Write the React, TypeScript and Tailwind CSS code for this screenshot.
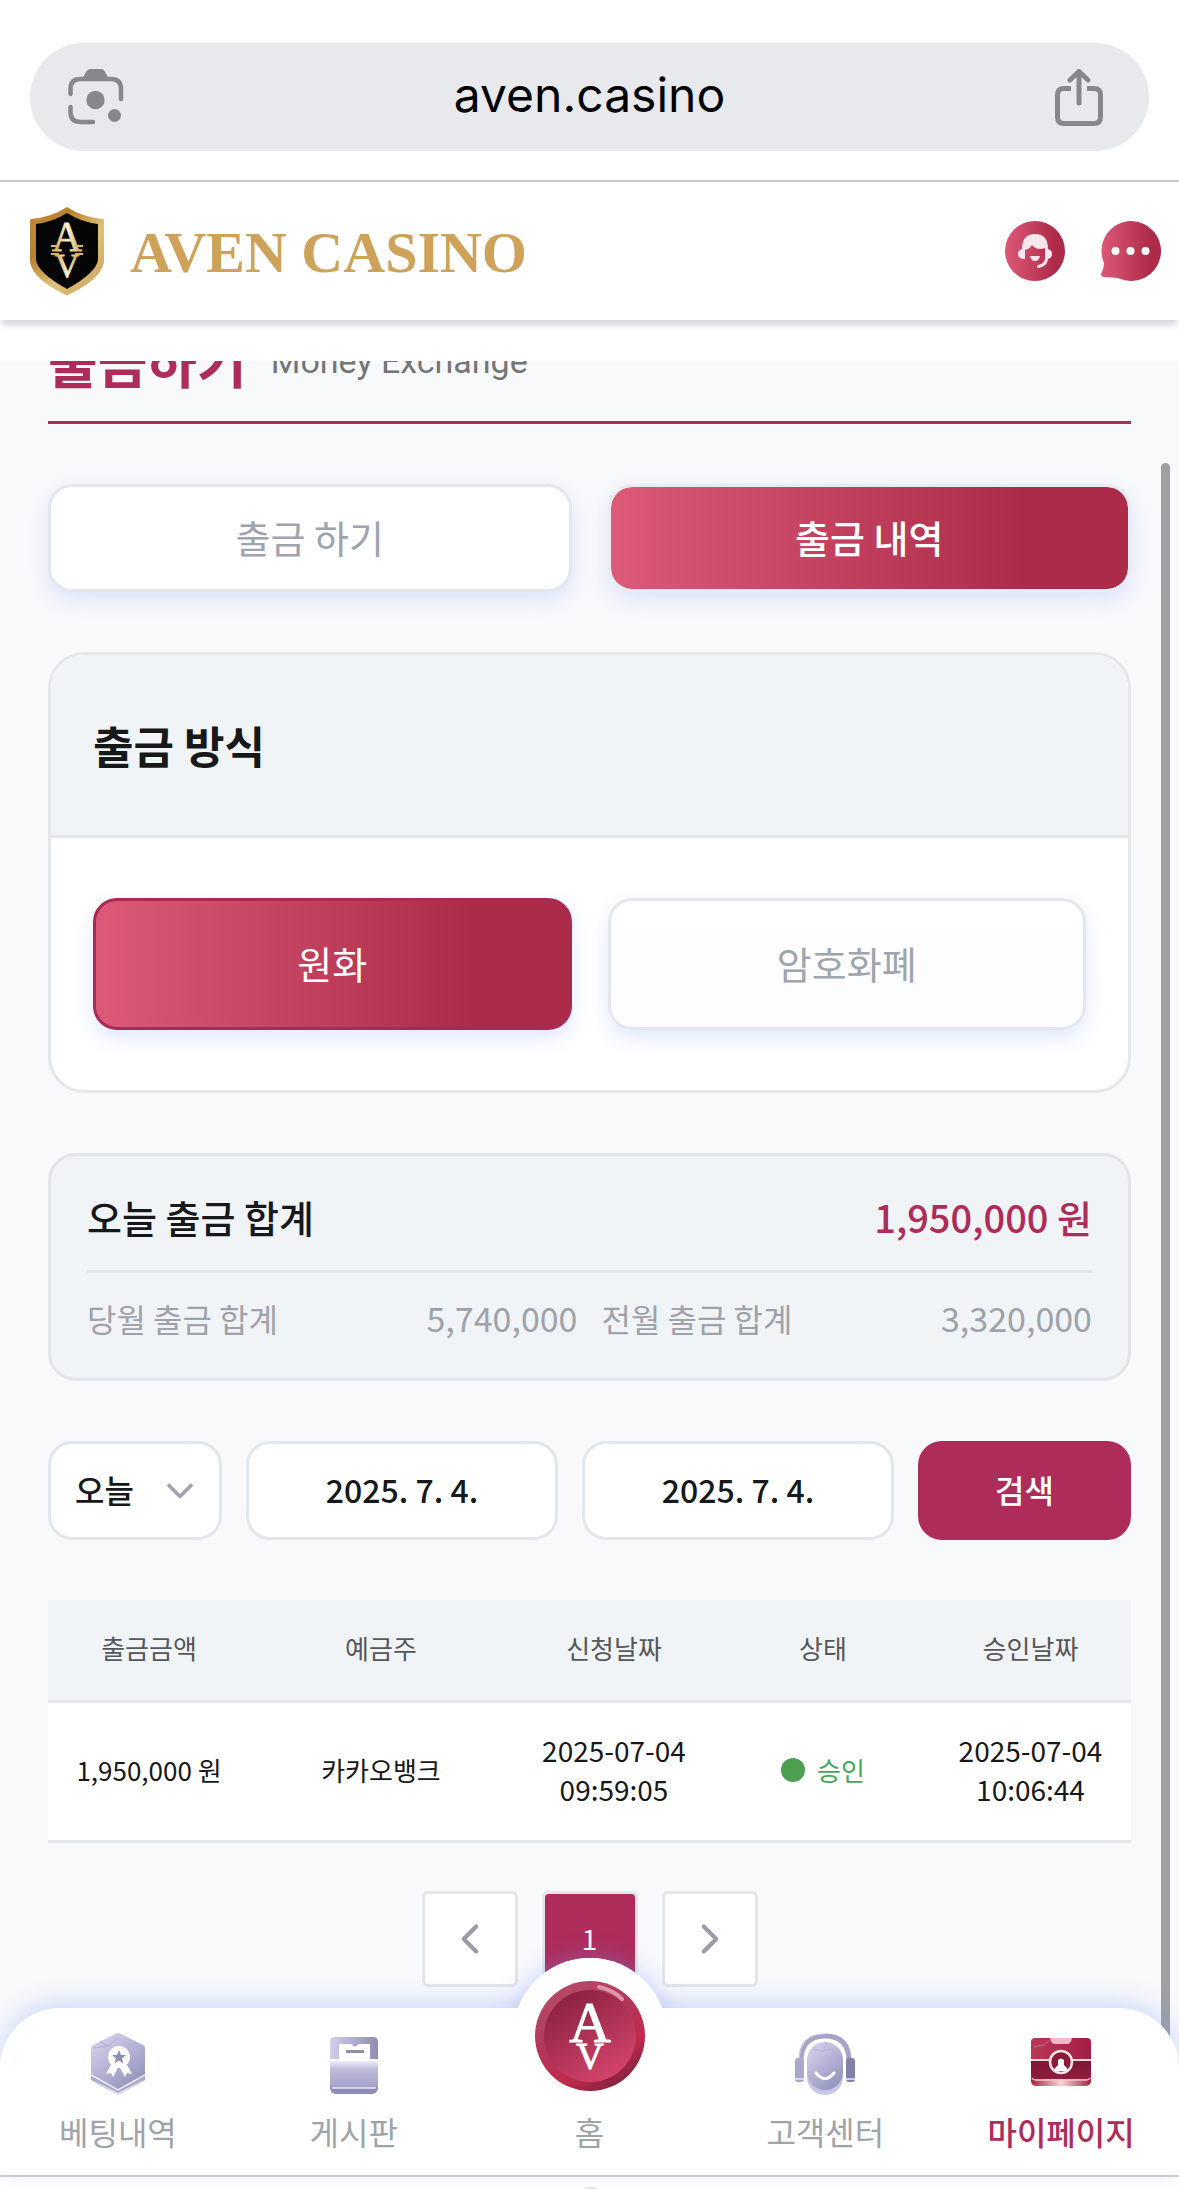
import { useState } from "react";
import { ChevronDown, ChevronLeft, ChevronRight } from "lucide-react";

const rows = [
  {
    amount: "1,950,000 원",
    holder: "카카오뱅크",
    requested: ["2025-07-04", "09:59:05"],
    status: "승인",
    approved: ["2025-07-04", "10:06:44"],
  },
];

// Google Lens style camera icon in the address bar
function LensIcon() {
  return (
    <svg width="56" height="56" viewBox="0 0 56 56" fill="none" aria-hidden="true">
      <path d="M14 10 L18 3 Q19.500 0 22 0 H33 Q36 0 37 3 L41 10 Z" fill="#85898c" />
      <path
        d="M2.500 25 V20 Q2.500 10 12.500 10 H43 Q53 10 53 20 V30"
        stroke="#85898c"
        strokeWidth="4.500"
        strokeLinecap="round"
      />
      <path
        d="M2.500 38 V43 Q2.500 53 12.500 53 H25"
        stroke="#85898c"
        strokeWidth="4.500"
        strokeLinecap="round"
      />
      <circle cx="27.500" cy="31" r="9.200" fill="#85898c" />
      <circle cx="46.500" cy="46.500" r="6.500" fill="#85898c" />
    </svg>
  );
}

function ShareIcon() {
  return (
    <svg
      width="48"
      height="57"
      viewBox="0 0 48 57"
      fill="none"
      stroke="#85898c"
      strokeWidth="5"
      strokeLinecap="round"
      strokeLinejoin="round"
      aria-hidden="true"
    >
      <path d="M24 4 V34" />
      <path d="M15 11 L24 2.500 L33 11" />
      <path
        d="M16 19.500 H9 Q2.500 19.500 2.500 26 V48 Q2.500 54.500 9 54.500 H39 Q45.500 54.500 45.500 48 V26 Q45.500 19.500 39 19.500 H32"
        strokeLinecap="butt"
      />
    </svg>
  );
}

function ShieldLogo() {
  return (
    <svg width="74" height="88" viewBox="0 0 74 88" aria-hidden="true">
      <defs>
        <linearGradient id="gold" x1="0" y1="0" x2="1" y2="1">
          <stop offset="0" stopColor="#c08a3a" />
          <stop offset="0.300" stopColor="#b9822f" />
          <stop offset="0.600" stopColor="#dfc27a" />
          <stop offset="1" stopColor="#c9a05a" />
        </linearGradient>
        <linearGradient id="goldLetter" x1="0" y1="0" x2="1" y2="0">
          <stop offset="0" stopColor="#c9a04d" />
          <stop offset="0.500" stopColor="#fbf3cf" />
          <stop offset="1" stopColor="#c9a04d" />
        </linearGradient>
      </defs>
      <path
        d="M37 0 Q52 10 73 12 Q74 12 74 14 V55 Q71 72 40 87 Q37 89 34 87 Q3 72 0 55 V14 Q0 12 1 12 Q22 10 37 0 Z"
        fill="url(#gold)"
      />
      <path d="M37 6 Q51 15 68 17 V53 Q66 66 37 82 Q8 66 6 53 V17 Q23 15 37 6 Z" fill="#050505" />
      <text
        x="37"
        y="44"
        textAnchor="middle"
        fontSize="42"
        fill="url(#goldLetter)"
        stroke="url(#goldLetter)"
        strokeWidth="0.800"
        className="font-['Liberation_Serif',serif]"
      >
        A
      </text>
      <text
        x="37"
        y="70"
        textAnchor="middle"
        fontSize="34"
        fill="url(#goldLetter)"
        stroke="url(#goldLetter)"
        strokeWidth="0.800"
        className="font-['Liberation_Serif',serif]"
      >
        V
      </text>
      <path d="M21 39 H29 M45 39 H53" stroke="#d8b868" strokeWidth="2" />
      <path d="M21 47 H29 M45 47 H53" stroke="#d8b868" strokeWidth="2" />
    </svg>
  );
}

function SupportIcon() {
  return (
    <svg width="60" height="60" viewBox="0 0 60 60" aria-hidden="true">
      <defs>
        <linearGradient id="support" x1="0" y1="0" x2="1" y2="0">
          <stop offset="0" stopColor="#dc5a78" />
          <stop offset="0.850" stopColor="#ad2b49" />
        </linearGradient>
      </defs>
      <circle cx="30" cy="30" r="30" fill="url(#support)" />
      <path
        d="M17 28 Q17 13 30 13 Q43 13 43 28 Q47 29 47 33 Q47 37 43 38 Q42 46 33 47 Q31 46 33 44 Q39 43 40 38 V27 Q32 30 27 24 Q25 28 20 29 V38 Q13 38 13 33 Q13 29 17 28 Z"
        fill="#f8e6ea"
      />
      <path d="M25 35 H35 Q34 40 30 40 Q26 40 25 35 Z" fill="#f8e6ea" />
    </svg>
  );
}

function ChatIcon() {
  return (
    <svg width="60" height="60" viewBox="0 0 60 60" aria-hidden="true">
      <path
        d="M30 0 A30 30 0 1 1 18 57.500 Q12 56 3 56 Q0 56 0 53 Q3 48 3 42 A30 30 0 0 1 30 0 Z"
        fill="url(#support)"
      />
      <circle cx="14.500" cy="30" r="4" fill="#fff" />
      <circle cx="29.500" cy="30" r="4" fill="#fff" />
      <circle cx="44.500" cy="30" r="4" fill="#fff" />
    </svg>
  );
}

function BettingIcon() {
  return (
    <svg width="54" height="62" viewBox="0 0 54 62" aria-hidden="true">
      <defs>
        <linearGradient id="lilac" x1="0" y1="0" x2="0.700" y2="1">
          <stop offset="0" stopColor="#dcd8f2" />
          <stop offset="1" stopColor="#9494bd" />
        </linearGradient>
      </defs>
      <path d="M27 12 L54 30 V47 L27 62 L0 47 V30 Z" fill="#a9a8ca" />
      <path d="M0 46 L27 60 L54 46 L27 62 Z" fill="#e6e1f7" />
      <path d="M24 1 Q27 -1 30 1 L52 12 Q54 13 54 15 V42 L27 57 L0 42 V15 Q0 13 2 12 Z" fill="url(#lilac)" />
      <path d="M0 42 L27 57 L54 42" fill="none" stroke="#f3f0fd" strokeWidth="1.500" />
      <path d="M9 8 L17 13 L27 5 M17 13 L2 15" stroke="#b1afd0" strokeWidth="1" fill="none" />
      <path d="M21 30 L15 41 L20 40 L22 44 L28 33 L34 44 L36 40 L41 41 L35 30 Z" fill="#fff" />
      <circle cx="28" cy="24" r="11" fill="#fff" />
      <path
        d="M28 17 L30 22 L35 22 L31 25.500 L32.500 30.500 L28 27.500 L23.500 30.500 L25 25.500 L21 22 L26 22 Z"
        fill="#8e8db4"
      />
    </svg>
  );
}

function BoardIcon() {
  return (
    <svg width="50" height="62" viewBox="0 0 50 62" aria-hidden="true">
      <defs>
        <linearGradient id="boardTop" x1="0" y1="0" x2="1" y2="0">
          <stop offset="0" stopColor="#d3cdee" />
          <stop offset="1" stopColor="#8e8db3" />
        </linearGradient>
        <linearGradient id="boardBody" x1="0" y1="0" x2="0" y2="1">
          <stop offset="0" stopColor="#eeecf9" />
          <stop offset="0.300" stopColor="#bfbcdd" />
          <stop offset="1" stopColor="#a3a1c8" />
        </linearGradient>
      </defs>
      <rect x="1" y="46" width="48" height="15" rx="6" fill="#8d8cb3" />
      <path d="M6 4 H44 Q49 4 49 9 V26 H1 V9 Q1 4 6 4 Z" fill="url(#boardTop)" />
      <path d="M10 11 H22 L26 14 L30 11 H41 V27 H10 Z" fill="#fff" />
      <path d="M17 18.500 H35" stroke="#8e8db4" strokeWidth="3" />
      <path d="M1 28 H49 V51 Q49 55 45 55 H5 Q1 55 1 51 Z" fill="url(#boardBody)" />
      <path d="M3 55 H47" stroke="#e6e2f8" strokeWidth="1.500" />
    </svg>
  );
}

function CenterIcon() {
  return (
    <svg width="60" height="62" viewBox="0 0 60 62" aria-hidden="true">
      <path d="M6 28 Q6 3 30 3 Q54 3 54 28" fill="none" stroke="#a5a3c8" strokeWidth="5" />
      <path d="M4 26 Q6 1 30 1" fill="none" stroke="#cfcde6" strokeWidth="1" />
      <rect x="0" y="25" width="9" height="24" rx="3" fill="#aaa8cc" />
      <rect x="51" y="25" width="9" height="24" rx="3" fill="#8280a6" />
      <path d="M0 46 H9 M51 46 H60" stroke="#e8e6f5" strokeWidth="1.500" />
      <rect x="12" y="12" width="36" height="50" rx="18" fill="#c9c5e6" />
      <rect x="12" y="9" width="36" height="48" rx="18" fill="url(#lilac)" />
      <path d="M18 16 L28 18 L32 9 M28 18 L36 16" stroke="#b6b3d6" fill="none" />
      <path d="M21 40 Q30 51 39 40" fill="none" stroke="#fff" strokeWidth="3" strokeLinecap="round" />
    </svg>
  );
}

function MyPageIcon() {
  return (
    <svg width="62" height="62" viewBox="0 0 62 62" aria-hidden="true">
      <defs>
        <linearGradient id="chestTop" x1="0" y1="0" x2="1" y2="0">
          <stop offset="0" stopColor="#b93857" />
          <stop offset="1" stopColor="#a21f43" />
        </linearGradient>
        <linearGradient id="chestLow" x1="0" y1="0" x2="1" y2="0">
          <stop offset="0" stopColor="#a3213f" />
          <stop offset="0.500" stopColor="#fbd5d8" />
          <stop offset="1" stopColor="#a3213f" />
        </linearGradient>
        <linearGradient id="chestBody" x1="0" y1="0" x2="0" y2="1">
          <stop offset="0" stopColor="#7c1738" />
          <stop offset="1" stopColor="#8f1d3b" />
        </linearGradient>
      </defs>
      <rect x="1" y="40" width="60" height="13" rx="5" fill="url(#chestLow)" />
      <path d="M5 5 H57 Q61 5 61 9 V27 H1 V9 Q1 5 5 5 Z" fill="url(#chestTop)" />
      <path d="M1 27 H61 V42 Q61 46 57 46 H5 Q1 46 1 42 Z" fill="url(#chestBody)" />
      <path d="M1 27 H61" stroke="#f6d5db" strokeWidth="2" />
      <path d="M2 45 Q3 47 6 47 H56 Q59 47 60 45" stroke="#f3c6cf" strokeWidth="1.500" fill="none" />
      <path d="M20 5 H42 Q41 11 37 11 H25 Q21 11 20 5 Z" fill="#f0b9c6" />
      <path d="M4 14 L13 12 L19 8" stroke="#cf6a83" fill="none" />
      <circle cx="31" cy="29" r="11" fill="#8c1b3b" stroke="#fae5e9" strokeWidth="2.500" />
      <path d="M28 38 Q23 38 25 35 L28 32 V27 Q31 24 34 27 V32 L37 35 Q39 38 34 38 Z" fill="#fff" />
    </svg>
  );
}

function HomeIcon() {
  return (
    <svg width="110" height="110" viewBox="0 0 110 110" aria-hidden="true">
      <defs>
        <linearGradient id="rim" x1="0" y1="0" x2="0.600" y2="1">
          <stop offset="0" stopColor="#b8506c" />
          <stop offset="0.500" stopColor="#b3375a" />
          <stop offset="0.800" stopColor="#c02a4c" />
          <stop offset="1" stopColor="#8c2340" />
        </linearGradient>
        <linearGradient id="disc" x1="0.200" y1="0" x2="0.800" y2="1">
          <stop offset="0" stopColor="#87203f" />
          <stop offset="1" stopColor="#d9466f" />
        </linearGradient>
      </defs>
      <circle cx="55" cy="55" r="55" fill="url(#rim)" />
      <circle cx="55" cy="55" r="46" fill="url(#disc)" />
      <path d="M64 6 Q78 9 87 18" fill="none" stroke="#dc97a9" strokeWidth="4" strokeLinecap="round" />
      <text
        x="55"
        y="61"
        textAnchor="middle"
        fontSize="58"
        fill="#fff"
        stroke="#fff"
        strokeWidth="1"
        className="font-['Liberation_Serif',serif]"
      >
        A
      </text>
      <text
        x="55"
        y="88"
        textAnchor="middle"
        fontSize="38"
        fill="#fff"
        stroke="#fff"
        strokeWidth="1"
        className="font-['Liberation_Serif',serif]"
      >
        V
      </text>
    </svg>
  );
}

const navItems = [
  { label: "베팅내역", icon: <BettingIcon />, active: false },
  { label: "게시판", icon: <BoardIcon />, active: false },
  { label: "홈", icon: null, active: false },
  { label: "고객센터", icon: <CenterIcon />, active: false },
  { label: "마이페이지", icon: <MyPageIcon />, active: true },
];

export default function App() {
  const [period, setPeriod] = useState("today");
  const [from, setFrom] = useState("2025. 7. 4.");
  const [to, setTo] = useState("2025. 7. 4.");

  return (
    <div className="bg-white font-['Noto_Sans_CJK_KR',sans-serif] text-[#17181a] overflow-hidden">
      {/* Browser address bar */}
      <div className="border-b-2 border-[#c9cacd] px-[30px] pt-[43px] pb-[29px]">
        <div className="flex h-[108px] items-center justify-between rounded-full bg-[#e8e9ed] pr-[46px] pl-[38px]">
          <button type="button" aria-label="이미지 검색">
            <LensIcon />
          </button>
          <span className="pb-1 font-['Inter',sans-serif] text-[48px] leading-[64px] text-black">
            aven.casino
          </span>
          <button type="button" aria-label="공유">
            <ShareIcon />
          </button>
        </div>
      </div>

      {/* Site header */}
      <header className="relative flex h-[138px] items-center justify-between bg-white pr-[18px] pl-[30px] shadow-[0_7px_6px_-2px_rgba(20,20,50,0.17)]">
        <a href="#" className="flex items-center gap-[26px]">
          <ShieldLogo />
          <span className="pt-1 font-['Liberation_Serif',serif] text-[58px] leading-[64px] font-bold text-[#cfa25a]">
            AVEN CASINO
          </span>
        </a>
        <div className="flex items-center gap-9">
          <button type="button" aria-label="상담원">
            <SupportIcon />
          </button>
          <button type="button" aria-label="채팅">
            <ChatIcon />
          </button>
        </div>
      </header>

      <div className="relative mt-[41px] bg-[#f8f9fb]">
        <main className="px-12 pb-[21px]">
          {/* Page title, scrolled half way under the header */}
          <div className="overflow-hidden border-b-3 border-[#ab2f57] pb-8">
            <div className="-mt-7 flex h-14 items-center gap-6">
              <h1 className="text-[54px] leading-[56px] font-bold text-[#ae2c5a]">출금하기</h1>
              <span className="font-['Roboto',sans-serif] text-[34px] leading-[56px] text-[#757578]">
                Money Exchange
              </span>
            </div>
          </div>

          <div className="mt-[60px] grid grid-cols-2 gap-9 text-[38px]">
            <button
              type="button"
              className="h-[108px] rounded-[24px] border-3 border-[#e4e8ee] bg-white pb-1 text-[#9ea3ad] shadow-[0_8px_20px_rgba(170,185,250,0.35)]"
            >
              출금 하기
            </button>
            <button
              type="button"
              className="h-[108px] rounded-[24px] border-3 border-[#e8ebf3] bg-linear-to-r from-[#dc5a78] to-[#ac2b49] to-80% bg-clip-padding pb-1 font-medium text-white shadow-[0_8px_20px_rgba(170,185,250,0.35)]"
            >
              출금 내역
            </button>
          </div>

          <section className="mt-[60px] overflow-hidden rounded-[36px] border-3 border-[#e4e7ec] bg-white">
            <h2 className="flex h-[183px] items-center border-b-3 border-[#e4e7ec] bg-[#f1f4f7] px-[42px] text-[44px] font-bold">
              출금 방식
            </h2>
            <div className="grid grid-cols-2 gap-9 px-[42px] py-[60px] text-[38px]">
              <button
                type="button"
                className="h-[132px] rounded-[24px] border-3 border-[#a92a56] bg-linear-to-r from-[#dc5a78] to-[#ac2b49] to-80% pb-1 text-white shadow-[0_8px_20px_rgba(170,185,250,0.35)]"
              >
                원화
              </button>
              <button
                type="button"
                className="h-[132px] rounded-[24px] border-3 border-[#e4e8ee] bg-linear-to-b from-white to-[#fbfcfe] pb-1 text-[#a0a4ac] shadow-[0_8px_20px_rgba(170,185,250,0.35)]"
              >
                암호화폐
              </button>
            </div>
          </section>

          <section className="mt-[60px] rounded-[28px] border-3 border-[#e2e6ea] bg-[#f1f4f7] px-9 pt-[34px] pb-9">
            <div className="flex items-center justify-between border-b-3 border-[#e2e6ea] pb-[26px] font-medium">
              <span className="text-[38px] leading-[54px]">오늘 출금 합계</span>
              <strong className="text-[38px] leading-[54px] font-medium text-[#ae2c5a]">1,950,000 원</strong>
            </div>
            <div className="grid grid-cols-2 gap-6 pt-[21px] leading-[48px] text-[#9fa2aa]">
              <div className="flex items-center justify-between">
                <span className="text-[32px]">당월 출금 합계</span>
                <span className="text-[34px]">5,740,000</span>
              </div>
              <div className="flex items-center justify-between">
                <span className="text-[32px]">전월 출금 합계</span>
                <span className="text-[34px]">3,320,000</span>
              </div>
            </div>
          </section>

          <form className="mt-[60px] flex gap-6 text-[32px]" onSubmit={(e) => e.preventDefault()}>
            <div className="relative w-[174px] shrink-0">
              <select
                aria-label="기간"
                value={period}
                onChange={(e) => setPeriod(e.target.value)}
                className="h-[99px] w-full appearance-none rounded-[24px] border-3 border-[#e2e6ee] bg-white pb-1 pl-6 font-medium"
              >
                <option value="today">오늘</option>
              </select>
              <ChevronDown
                className="pointer-events-none absolute top-7 right-[20px] text-[#9fa3ad]"
                size={44}
                strokeWidth={2}
                aria-hidden="true"
              />
            </div>
            <input
              type="text"
              aria-label="시작일"
              value={from}
              onChange={(e) => setFrom(e.target.value)}
              className="h-[99px] min-w-0 flex-1 rounded-[24px] border-3 border-[#e2e6ee] bg-white pb-1 text-center font-medium"
            />
            <input
              type="text"
              aria-label="종료일"
              value={to}
              onChange={(e) => setTo(e.target.value)}
              className="h-[99px] min-w-0 flex-1 rounded-[24px] border-3 border-[#e2e6ee] bg-white pb-1 text-center font-medium"
            />
            <button
              type="submit"
              className="h-[99px] w-[213px] shrink-0 rounded-[24px] bg-[#ae2c5a] pb-1 font-medium text-white"
            >
              검색
            </button>
          </form>

          <table className="mt-[60px] w-full table-fixed border-collapse text-center text-[26px] leading-[39px]">
            <thead>
              <tr className="h-[101px] border-b-3 border-[#e3e6ea] bg-[#f1f4f7] text-[#55575b]">
                <th className="w-[202px] pb-1 font-normal">출금금액</th>
                <th className="w-[262px] pb-1 font-normal">예금주</th>
                <th className="w-[204px] pb-1 font-normal">신청날짜</th>
                <th className="w-[214px] pb-1 font-normal">상태</th>
                <th className="w-[201px] pb-1 font-normal">승인날짜</th>
              </tr>
            </thead>
            <tbody>
              {rows.map((row) => (
                <tr key={row.requested.join(" ")} className="h-[140px] border-b-3 border-[#e3e6ea] bg-white">
                  <td className="pb-1">{row.amount}</td>
                  <td className="pb-1">{row.holder}</td>
                  <td className="pb-[2px] text-[28px]">
                    {row.requested[0]}
                    <br />
                    {row.requested[1]}
                  </td>
                  <td className="pb-[2px]">
                    <span className="inline-flex items-center gap-3 text-[#43a85b]">
                      <span className="size-6 rounded-full bg-[#4d9f51]" aria-hidden="true" />
                      {row.status}
                    </span>
                  </td>
                  <td className="pb-[2px] text-[28px]">
                    {row.approved[0]}
                    <br />
                    {row.approved[1]}
                  </td>
                </tr>
              ))}
            </tbody>
          </table>

          <div className="mt-12 flex justify-center gap-6 text-[28px]">
            <button
              type="button"
              aria-label="이전"
              className="flex size-24 items-center justify-center rounded-md border-3 border-[#e4e6ea] bg-white text-[#999da5]"
            >
              <ChevronLeft size={50} strokeWidth={2} />
            </button>
            <button
              type="button"
              aria-current="page"
              className="size-24 rounded-md border-3 border-[#e4e6ea] bg-[#ae2c5a] bg-clip-padding pb-[2px] text-white"
            >
              1
            </button>
            <button
              type="button"
              aria-label="다음"
              className="flex size-24 items-center justify-center rounded-md border-3 border-[#e4e6ea] bg-white text-[#999da5]"
            >
              <ChevronRight size={50} strokeWidth={2} />
            </button>
          </div>
        </main>

        {/* Scroll indicator */}
        <div className="absolute top-[102px] right-[9px] bottom-[120px] w-[9px] rounded-full bg-[#9fa0a3]" />

        {/* Bottom tab bar */}
        <nav className="relative">
          <div className="absolute -top-[50px] left-1/2 size-[154px] -translate-x-1/2 rounded-full bg-white shadow-[0_0_24px_rgba(120,145,250,0.4)]" />
          <ul className="relative grid grid-cols-5 rounded-t-[60px] bg-white pt-[25px] pb-5 shadow-[0_-6px_24px_rgba(120,145,250,0.3)]">
            {navItems.map((item) => (
              <li key={item.label}>
                <a
                  href="#"
                  className={
                    item.active
                      ? "flex flex-col items-center text-[32px] leading-[48px] font-medium text-[#ae2c5a]"
                      : "flex flex-col items-center text-[32px] leading-[48px] text-[#9fa3aa]"
                  }
                >
                  <span className="mb-3 flex h-[62px] items-center">{item.icon}</span>
                  {item.label}
                </a>
              </li>
            ))}
          </ul>
          <a
            href="#"
            aria-label="홈"
            className="absolute -top-[50px] left-1/2 flex size-[154px] -translate-x-1/2 items-center justify-center rounded-full bg-white pt-[2px]"
          >
            <HomeIcon />
          </a>
        </nav>
      </div>

      {/* Top edge of the browser toolbar */}
      <div className="flex h-[14px] justify-center overflow-hidden border-t-2 border-[#cfd0d3] pt-[10px]">
        <div className="h-9 w-9 shrink-0 rounded-full bg-[#e4e4e6]" />
      </div>
    </div>
  );
}
